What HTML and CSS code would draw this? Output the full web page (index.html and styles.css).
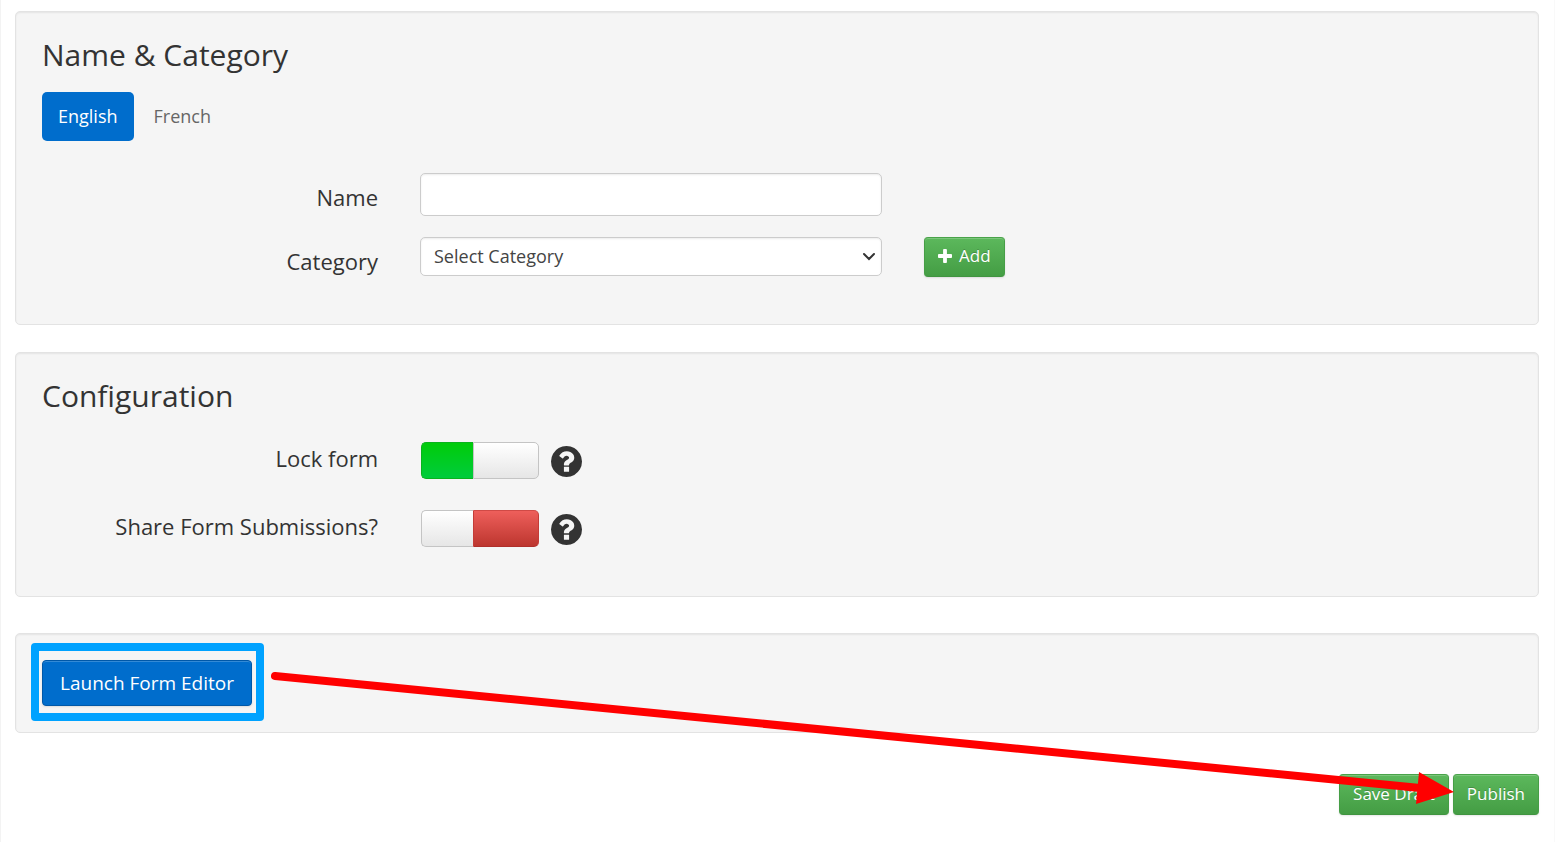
FILE: index.html
```html
<!DOCTYPE html>
<html lang="en">
<head>
<meta charset="utf-8">
<title>Form Settings</title>
<meta name="viewport" content="width=device-width, initial-scale=1">
<link rel="stylesheet" href="styles.css">
</head>
<body>
<svg class="sprite" aria-hidden="true">
  <symbol id="icon-plus" viewBox="192 128 1408 1408"><path d="M1600 736v192q0 40-28 68t-68 28h-416v416q0 40-28 68t-68 28H800q-40 0-68-28t-28-68v-416H288q-40 0-68-28t-28-68V736q0-40 28-68t68-28h416V224q0-40 28-68t68-28h192q40 0 68 28t28 68v416h416q40 0 68 28t28 68z"/></symbol>
  <symbol id="icon-help" viewBox="128 128 1536 1536"><path d="M1024 1376v-192q0-14-9-23t-23-9H800q-14 0-23 9t-9 23v192q0 14 9 23t23 9h192q14 0 23-9t9-23zm256-672q0-88-55.500-163T1086 425t-170-41q-243 0-371 213-15 24 8 42l132 100q7 6 19 6 16 0 25-12 53-68 86-92 34-24 86-24 48 0 85.500 26t37.500 59q0 38-20 61t-68 45q-63 28-115.500 86.500T768 1020v36q0 14 9 23t23 9h192q14 0 23-9t9-23q0-19 21.500-49.500T1100 957q32-18 49-28.500t46-35 44.500-48 28-60.500 12.500-81zm384 192q0 209-103 385.500T1281.500 1561 896 1664t-385.500-103T231 1281.500 128 896t103-385.500T510.500 231 896 128t385.500 103T1561 510.500 1664 896z"/></symbol>
</svg>
<form class="page">
  <section class="panel">
    <h2 class="panel-title">Name &amp; Category</h2>
    <nav class="tabs">
      <a class="tab tab-active" href="#english">English</a>
      <a class="tab" href="#french">French</a>
    </nav>
    <div class="rows">
      <div class="row">
        <label class="row-label row-label-field" for="name">Name</label>
        <input class="field field-text" id="name" type="text">
      </div>
      <div class="row">
        <label class="row-label row-label-field" for="category">Category</label>
        <div class="select-wrap">
          <select class="field field-select" id="category"><option>Select Category</option></select>
          <svg class="chevron" viewBox="0 0 14 9" aria-hidden="true"><path d="M2 2l5 5 5-5"/></svg>
        </div>
        <div><button class="btn btn-green btn-add" type="button"><svg class="plus" aria-hidden="true"><use href="#icon-plus"/></svg>Add</button></div>
      </div>
    </div>
  </section>

  <section class="panel panel-config">
    <h2 class="panel-title">Configuration</h2>
    <div class="rows rows-switches">
      <div class="row">
        <label class="row-label" for="lock">Lock form</label>
        <div class="control">
          <label class="switch"><input class="switch-input" id="lock" type="checkbox" checked><span class="switch-on"></span><span class="switch-off"></span></label>
          <button class="help" type="button" aria-label="Help: lock form"><svg class="help-icon" aria-hidden="true"><use href="#icon-help"/></svg></button>
        </div>
      </div>
      <div class="row">
        <label class="row-label" for="share">Share Form Submissions?</label>
        <div class="control">
          <label class="switch"><input class="switch-input" id="share" type="checkbox"><span class="switch-on"></span><span class="switch-off"></span></label>
          <button class="help" type="button" aria-label="Help: share form submissions"><svg class="help-icon" aria-hidden="true"><use href="#icon-help"/></svg></button>
        </div>
      </div>
    </div>
  </section>

  <section class="panel panel-launch">
    <div class="launch">
      <button class="btn btn-blue" type="button">Launch Form Editor</button>
      <span class="highlight"></span>
    </div>
  </section>

  <div class="actions">
    <button class="btn btn-green" type="button">Save Draft</button>
    <button class="btn btn-green" type="submit">Publish</button>
  </div>

  <svg class="arrow" viewBox="0 0 1555 842" aria-hidden="true">
    <path class="arrow-line" d="M275 676L1420 788"/>
    <path class="arrow-head" d="M1419 772L1454 792L1416 804z"/>
  </svg>
</form>
</body>
</html>
```
FILE: styles.css
```css
* { box-sizing: border-box; }

body {
  margin: 0;
  background: #fff;
  color: #333;
  font-family: "Open Sans", "Noto Sans", sans-serif;
  font-size: 18px;
}

button, input, select { font: inherit; }

.sprite { position: absolute; width: 0; height: 0; }

.page {
  position: relative;
  min-height: 100vh;
  padding: 11px 15px 24px 14px;
  border-left: 1px solid #f3f3f3;
  border-right: 1px solid #f9f9f9;
}

.panel {
  padding: 25px 26px 47px;
  border: 1px solid #e3e3e3;
  border-radius: 5px;
  background: #f5f5f5;
  box-shadow: inset 0 1px 2px rgba(0, 0, 0, 0.07);
}

.panel-config { margin-top: 27px; padding-bottom: 48px; }
.panel-launch { margin-top: 36px; padding: 26px; }

.panel-title {
  margin: 0;
  font-size: 30px;
  font-weight: 400;
  line-height: 36px;
}

.tabs { display: flex; gap: 4px; margin-top: 19px; }

.tab {
  padding: 12px 16px;
  border-radius: 5px;
  color: #666;
  line-height: 25px;
  text-decoration: none;
}

.tab-active { background: #006dcc; color: #fff; }

.rows { display: grid; gap: 21px; margin-top: 32px; }
.rows-switches { gap: 30px; margin-top: 28px; }

.row {
  display: grid;
  grid-template-columns: 8fr 11fr 14fr;
  column-gap: 42px;
  align-items: start;
}

.row-label {
  padding-top: 1px;
  font-size: 22px;
  line-height: 30px;
  text-align: right;
}

.row-label-field { padding-top: 9px; }

.field {
  display: block;
  width: 100%;
  padding: 0 13px;
  border: 1px solid #ccc;
  border-radius: 5px;
  background: #fff;
  color: #444;
  box-shadow: inset 0 1px 2px rgba(0, 0, 0, 0.08);
}

.field-text { height: 43px; }
.field-select { height: 39px; padding-bottom: 2px; appearance: none; }

.select-wrap { position: relative; }

.chevron {
  position: absolute;
  right: 6px;
  top: 15px;
  width: 14px;
  height: 9px;
  fill: none;
  stroke: #333;
  stroke-width: 2;
  stroke-linecap: round;
  pointer-events: none;
}

.btn {
  border: 1px solid;
  border-radius: 4px;
  color: #fff;
  font-size: 17px;
  cursor: pointer;
}

.btn-green {
  height: 41px;
  padding: 0 13px 3px;
  border-color: #49a349 #469e46 #409440;
  background: linear-gradient(#5cb85c, #449d44);
  box-shadow: inset 0 1px 0 rgba(255, 255, 255, 0.2), 0 1px 2px rgba(0, 0, 0, 0.1);
  text-shadow: 0 -1px 0 rgba(0, 0, 0, 0.2);
}

.btn-add { display: flex; align-items: center; gap: 7px; height: 40px; }
.plus { width: 14px; height: 14px; fill: #fff; }

.btn-blue {
  height: 46px;
  padding: 0 17px;
  border-color: #0058a8;
  background: #006dcc;
  font-size: 19px;
  box-shadow: inset 0 1px 0 rgba(255, 255, 255, 0.2), 0 1px 2px rgba(0, 0, 0, 0.1);
}

.control {
  display: flex;
  align-items: flex-start;
  gap: 12px;
  height: 38px;
  padding-left: 1px;
}

.switch {
  position: relative;
  display: flex;
  width: 118px;
  height: 37px;
  cursor: pointer;
}

.switch-input { position: absolute; inset: 0; width: 100%; height: 100%; margin: 0; opacity: 0; }

.switch-on, .switch-off {
  border: 1px solid #c4c4c4;
  background: linear-gradient(#fff, #e6e6e6);
}

.switch-on { width: 52px; border-right: 0; border-radius: 5px 0 0 5px; }
.switch-off { flex: 1; border-radius: 0 5px 5px 0; }

.switch-input:checked ~ .switch-on {
  border-color: #0ab31d;
  background: linear-gradient(#00cc0a, #00cc3c);
}

.switch-input:not(:checked) ~ .switch-off {
  border-color: #d04a46 #c43c38 #b02f2b;
  background: linear-gradient(#ee5f5b, #bd362f);
}

.help {
  display: flex;
  padding: 4px 0 0;
  border: 0;
  background: none;
  cursor: pointer;
}

.help-icon { width: 31px; height: 31px; fill: #333; }

.launch { position: relative; display: flex; width: fit-content; }

.highlight {
  position: absolute;
  inset: -17px -12px -15px -11px;
  border: 8px solid #00a2ff;
  border-radius: 4px;
  pointer-events: none;
}

.actions {
  display: flex;
  justify-content: flex-end;
  gap: 4px;
  margin-top: 41px;
}

.arrow {
  position: absolute;
  left: -1px;
  top: 0;
  width: 1555px;
  height: 842px;
  pointer-events: none;
}

.arrow-line { fill: none; stroke: #f00; stroke-width: 8; stroke-linecap: round; }
.arrow-head { fill: #f00; }
```
